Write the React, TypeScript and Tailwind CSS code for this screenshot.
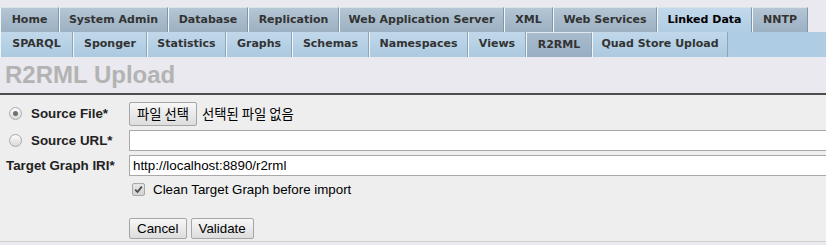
import React from 'react';

const topTabs = [
  { label: 'Home', w: 'w-[59px]' },
  { label: 'System Admin', w: 'w-[109px]' },
  { label: 'Database', w: 'w-[80px]' },
  { label: 'Replication', w: 'w-[91px]' },
  { label: 'Web Application Server', w: 'w-[165px]' },
  { label: 'XML', w: 'w-[49px]' },
  { label: 'Web Services', w: 'w-[104px]' },
  { label: 'Linked Data', w: 'w-[95px]', active: true },
  { label: 'NNTP', w: 'w-[56px]' },
];

const subTabs = [
  { label: 'SPARQL', w: 'w-[73px]' },
  { label: 'Sponger', w: 'w-[74px]' },
  { label: 'Statistics', w: 'w-[79px]' },
  { label: 'Graphs', w: 'w-[66px]' },
  { label: 'Schemas', w: 'w-[77px]' },
  { label: 'Namespaces', w: 'w-[99px]' },
  { label: 'Views', w: 'w-[58px]' },
  { label: 'R2RML', w: 'w-[66px]', active: true },
  { label: 'Quad Store Upload', w: 'w-[136px]' },
];

const Radio: React.FC<{ checked?: boolean }> = ({ checked }) => (
  <span className="w-[13px] h-[13px] rounded-full border border-[#a9a9a9] bg-linear-to-b from-[#fbfbfb] to-[#dadada] flex items-center justify-center shrink-0">
    {checked && <span className="w-[5px] h-[5px] rounded-full bg-[#707070]" />}
  </span>
);

const Checkbox: React.FC = () => (
  <span className="w-[13px] h-[13px] rounded-[2px] border border-[#a9a9a9] bg-linear-to-b from-[#e6e6e6] to-[#d2d2d2] flex items-center justify-center shrink-0">
    <svg width="9" height="9" viewBox="0 0 9 9">
      <path d="M1.2 4.6 L3.5 7 L7.8 1.6" fill="none" stroke="#4a4a4a" strokeWidth="1.8" />
    </svg>
  </span>
);

const btn =
  'h-[21px] px-[7px] border border-[#a6a6a6] rounded-[2px] bg-linear-to-b from-[#f7f7f7] to-[#dddddd] text-[13.33px] text-black flex items-center';

const input = 'w-[760px] h-[21px] shrink-0 border border-[#a9a9a9] bg-white px-[3px] text-[13.33px] outline-none';

export default function App() {
  return (
    <div className="w-[826px] h-[245px] overflow-hidden bg-[#e9e9ef] pt-[7px] font-['Liberation_Sans',Arial,sans-serif]">
      {/* main tabs */}
      <div className="flex h-[25px] font-['DejaVu_Sans',Verdana,sans-serif] text-[11px] font-bold">
        {topTabs.map((t) => (
          <div
            key={t.label}
            className={`${t.w} h-[25px] flex items-center justify-center border-t border-l border-r border-t-[#dbe3ea] border-l-[#f3f6f9] border-r-[#8196a8] ${
              t.active
                ? 'bg-linear-to-b from-[#c3d9eb] to-[#afcde4] text-black'
                : 'bg-linear-to-b from-[#b5c6d5] to-[#9bb0c2] text-[#333]'
            }`}
          >
            {t.label}
          </div>
        ))}
      </div>

      {/* sub tabs */}
      <div className="flex h-[25px] bg-[#aecce3] font-['DejaVu_Sans',Verdana,sans-serif] text-[11px] font-bold">
        {subTabs.map((t) => (
          <div
            key={t.label}
            className={`${t.w} h-[25px] flex items-center justify-center border-l border-r border-l-[#eef4f9] border-r-[#8ea4b7] ${
              t.active
                ? 'bg-linear-to-b from-[#a9bccd] to-[#97aec1] border-t border-t-[#e2e8ee] text-[#333]'
                : 'bg-linear-to-b from-[#c1d8ea] to-[#abc9e0] text-[#333]'
            }`}
          >
            {t.label}
          </div>
        ))}
      </div>

      <h1 className="mt-[4px] mb-[4px] pl-[5px] h-[28px] leading-[28px] text-[24px] font-bold text-[#b3b3b3]">
        R2RML Upload
      </h1>
      <div className="h-[2px] bg-[#4d4d4d]" />

      {/* form */}
      <div className="bg-[#eeeeee] border-b border-[#cdcdcd] pt-[7px] pb-[2px] text-[13.33px] text-black">
        <div className="flex h-[24px] items-center">
          <div className="w-[129px] shrink-0 flex items-center gap-[9px] pl-[9px] font-bold text-[#222]">
            <Radio checked />
            Source File*
          </div>
          <button className="h-[24px] px-[7px] border border-[#a6a6a6] rounded-[2px] bg-linear-to-b from-[#f7f7f7] to-[#dddddd] font-['Noto_Sans_CJK_KR',sans-serif] text-[13.33px] flex items-center">
            파일 선택
          </button>
          <span className="ml-[5px] font-['Noto_Sans_CJK_KR',sans-serif]">선택된 파일 없음</span>
        </div>

        <div className="flex h-[21px] mt-[4px] items-center">
          <div className="w-[129px] shrink-0 flex items-center gap-[9px] pl-[9px] font-bold text-[#222]">
            <Radio />
            Source URL*
          </div>
          <input className={input} />
        </div>

        <div className="flex h-[21px] mt-[4px] items-center">
          <div className="w-[129px] shrink-0 pl-[6px] font-bold text-[#222]">Target Graph IRI*</div>
          <input className={input} defaultValue="http://localhost:8890/r2rml" />
        </div>

        <div className="flex h-[20px] mt-[4px] items-center">
          <div className="w-[129px] shrink-0" />
          <div className="flex items-center gap-[8px] pl-[3px]">
            <Checkbox />
            Clean Target Graph before import
          </div>
        </div>

        <div className="flex h-[21px] mt-[18px] items-center">
          <div className="w-[129px] shrink-0" />
          <div className="flex gap-[4px]">
            <button className={btn}>Cancel</button>
            <button className={btn}>Validate</button>
          </div>
        </div>
      </div>
    </div>
  );
}
